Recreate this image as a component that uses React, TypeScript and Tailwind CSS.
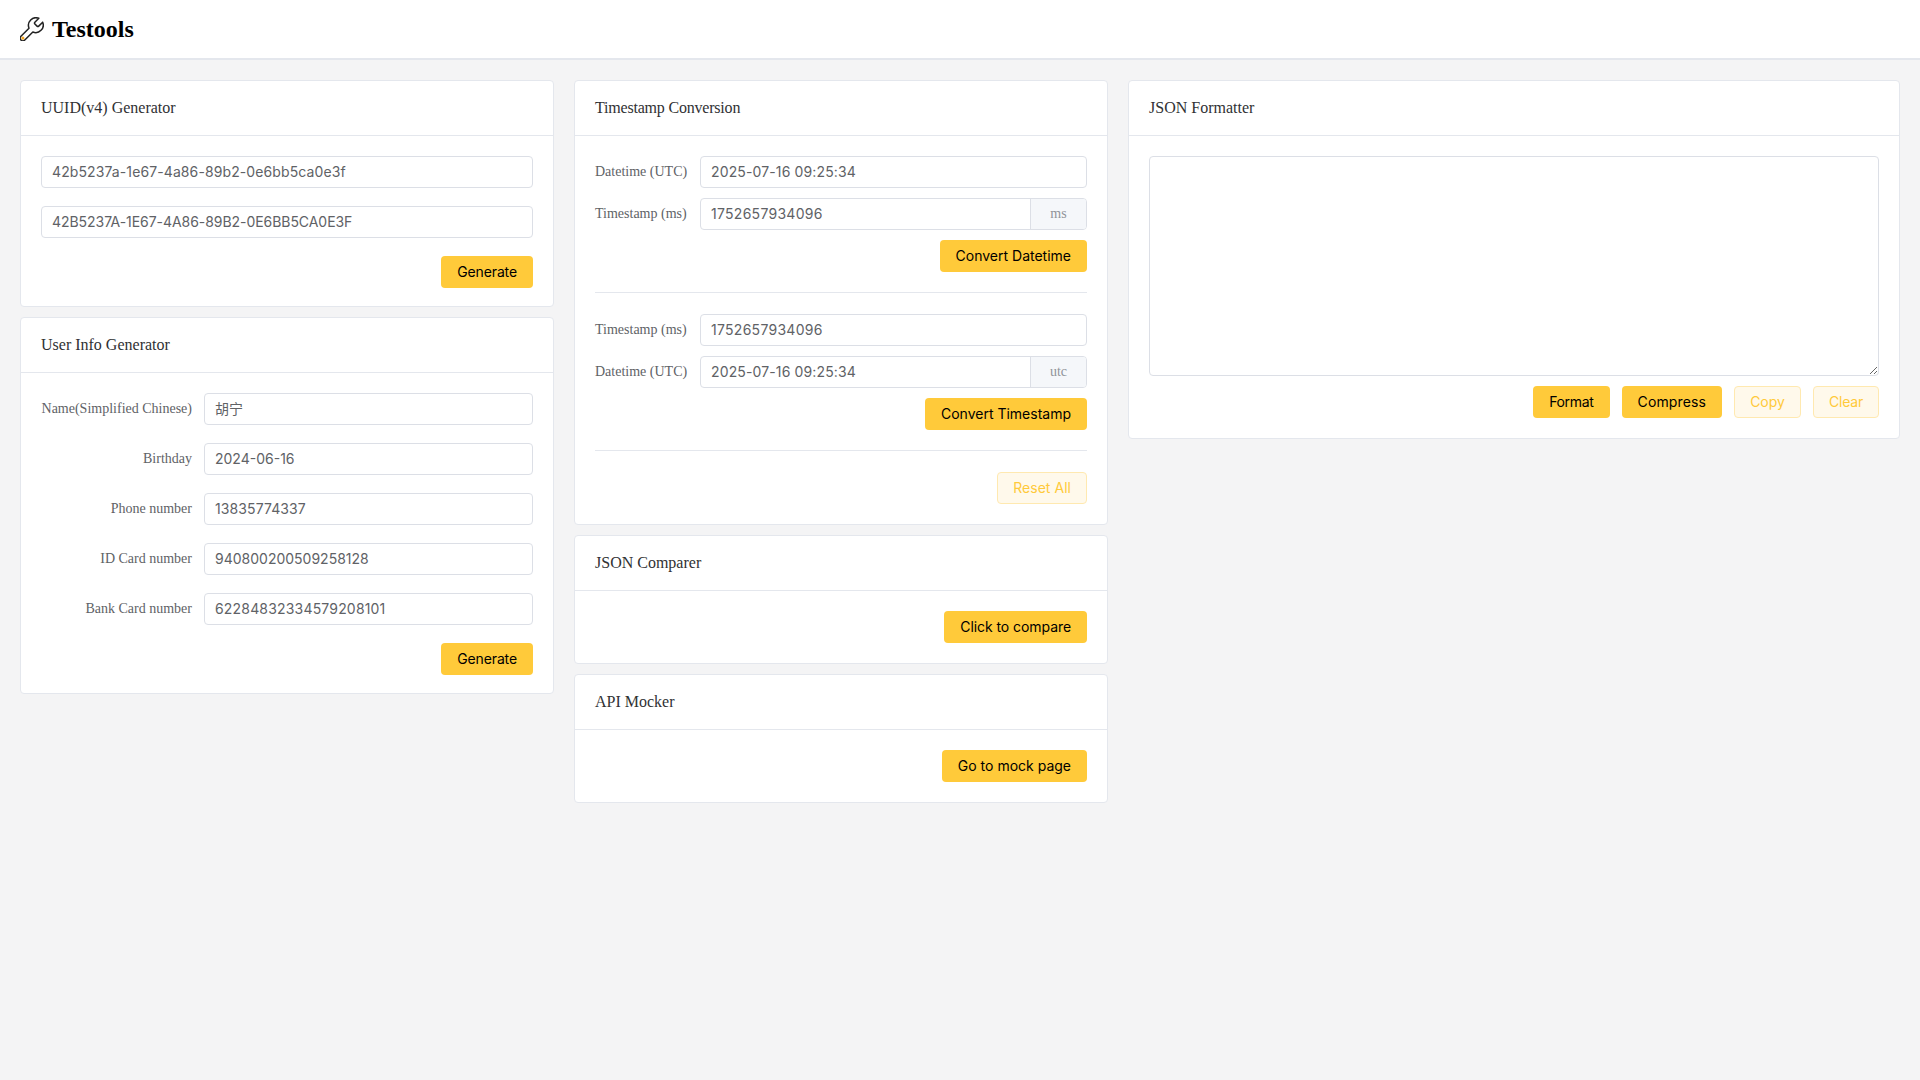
import React from "react";

const serif = "font-['Liberation_Serif',serif]";
const inter = "font-['Inter',sans-serif]";

function WrenchIcon() {
    return (
        <svg width="24" height="24" viewBox="2.4 1.6 20 20" fill="none" className="shrink-0">
            <path
                d="M14.8 6a1 1 0 0 0 0 1.4l1.8 1.8a1 1 0 0 0 1.4 0l3.3-3.3a6.3 6.3 0 0 1-8.2 8.2L6.4 20.8a2.26 2.26 0 0 1-3.2-3.2L9.9 10.9a6.3 6.3 0 0 1 8.2-8.2z"
                stroke="#222222"
                strokeWidth="1.25"
                strokeLinejoin="round"
            />
            <circle cx="4.8" cy="19.2" r="1.3" fill="#f5a623" />
        </svg>
    );
}

function Btn({ children, plain, className = "" }: { children: React.ReactNode; plain?: boolean; className?: string }) {
    return (
        <button
            type="button"
            className={
                plain
                    ? `h-8 px-[15px] rounded border border-[#ffe9b0] bg-[#fff9eb] text-[#ffca3a] text-sm ${inter} ${className}`
                    : `h-8 px-4 rounded bg-[#ffca3a] text-black text-sm ${inter} ${className}`
            }
        >
            {children}
        </button>
    );
}

function Card({ title, titleClass = "", compact, children }: { title: string; titleClass?: string; compact?: boolean; children: React.ReactNode }) {
    return (
        <div className="bg-white border border-[#e4e7ed] rounded">
            <div className={`h-[55px] px-5 flex items-center border-b border-[#e4e7ed] text-base text-[#303133] ${serif} ${titleClass}`}>
                {title}
            </div>
            <div className={compact ? "px-5 pt-5 pb-[18px]" : "p-5"}>{children}</div>
        </div>
    );
}

function TextBox({ value, unit, track = "" }: { value: string; unit?: string; track?: string }) {
    return (
        <div className="flex-1 min-w-0 h-8 flex border border-[#dcdfe6] rounded bg-white overflow-hidden">
            <input
                readOnly
                value={value}
                className={`flex-1 min-w-0 px-[10px] text-sm text-[#606266] outline-none font-['Inter','Noto_Sans_CJK_SC',sans-serif] ${track}`}
            />
            {unit && (
                <span className={`w-[56px] flex items-center justify-center border-l border-[#dcdfe6] bg-[#f5f7fa] text-sm text-[#909399] ${serif}`}>
                    {unit}
                </span>
            )}
        </div>
    );
}

function UserRow({ label, value, track }: { label: string; value: string; track?: string }) {
    return (
        <div className="flex items-center mb-[18px]">
            <label className={`w-[163px] pr-3 text-right text-sm text-[#606266] ${serif}`}>{label}</label>
            <TextBox value={value} track={track} />
        </div>
    );
}

function TsRow({ label, value, unit, track }: { label: string; value: string; unit?: string; track?: string }) {
    return (
        <div className="flex items-center mb-[10px]">
            <label className={`w-[105px] text-sm text-[#606266] ${serif}`}>{label}</label>
            <TextBox value={value} unit={unit} track={track} />
        </div>
    );
}

export default function App() {
    return (
        <div className="min-h-screen bg-[#f4f4f5]">
            <header className="h-[60px] bg-white border-b-2 border-[#e4e7ed] pl-5 flex items-center gap-2">
                <WrenchIcon />
                <h1 className={`text-2xl font-bold text-black ${serif}`}>Testools</h1>
            </header>

            <main className="grid grid-cols-[534px_534px_1fr] gap-5 p-5 items-start">
                <div className="flex flex-col gap-[10px]">
                    <Card title="UUID(v4) Generator" compact>
                        <div className="mb-[18px]"><TextBox value="42b5237a-1e67-4a86-89b2-0e6bb5ca0e3f" track="tracking-[0.1px]" /></div>
                        <div className="mb-[18px]"><TextBox value="42B5237A-1E67-4A86-89B2-0E6BB5CA0E3F" track="tracking-[-0.05px]" /></div>
                        <div className="flex justify-end"><Btn className="tracking-[-0.12px]">Generate</Btn></div>
                    </Card>
                    <Card title="User Info Generator" compact>
                        <UserRow label="Name(Simplified Chinese)" value="胡宁" />
                        <UserRow label="Birthday" value="2024-06-16" />
                        <UserRow label="Phone number" value="13835774337" track="tracking-[0.1px]" />
                        <UserRow label="ID Card number" value="940800200509258128" />
                        <UserRow label="Bank Card number" value="62284832334579208101" track="tracking-[0.18px]" />
                        <div className="flex justify-end"><Btn className="tracking-[-0.12px]">Generate</Btn></div>
                    </Card>
                </div>

                <div className="flex flex-col gap-[10px]">
                    <Card title="Timestamp Conversion" titleClass="tracking-[-0.2px]">
                        <TsRow label="Datetime (UTC)" value="2025-07-16 09:25:34" track="tracking-[0.13px]" />
                        <TsRow label="Timestamp (ms)" value="1752657934096" unit="ms" track="tracking-[0.28px]" />
                        <div className="flex justify-end"><Btn>Convert Datetime</Btn></div>
                        <div className="border-t border-[#e4e7ed] mt-5 mb-[21px]" />
                        <TsRow label="Timestamp (ms)" value="1752657934096" track="tracking-[0.28px]" />
                        <TsRow label="Datetime (UTC)" value="2025-07-16 09:25:34" unit="utc" track="tracking-[0.13px]" />
                        <div className="flex justify-end"><Btn>Convert Timestamp</Btn></div>
                        <div className="border-t border-[#e4e7ed] mt-5 mb-[21px]" />
                        <div className="flex justify-end"><Btn plain className="tracking-[0.04px]">Reset All</Btn></div>
                    </Card>
                    <Card title="JSON Comparer">
                        <div className="flex justify-end"><Btn className="tracking-[-0.07px]">Click to compare</Btn></div>
                    </Card>
                    <Card title="API Mocker">
                        <div className="flex justify-end"><Btn>Go to mock page</Btn></div>
                    </Card>
                </div>

                <Card title="JSON Formatter">
                    <textarea className="block w-full h-[220px] border border-[#dcdfe6] rounded px-[10px] py-[5px] text-sm outline-none resize-y" />
                    <div className="flex justify-end gap-3 mt-[10px]">
                        <Btn className="tracking-[-0.33px]">Format</Btn>
                        <Btn className="tracking-[0.15px]">Compress</Btn>
                        <Btn plain>Copy</Btn>
                        <Btn plain className="tracking-[-0.2px]">Clear</Btn>
                    </div>
                </Card>
            </main>
        </div>
    );
}
